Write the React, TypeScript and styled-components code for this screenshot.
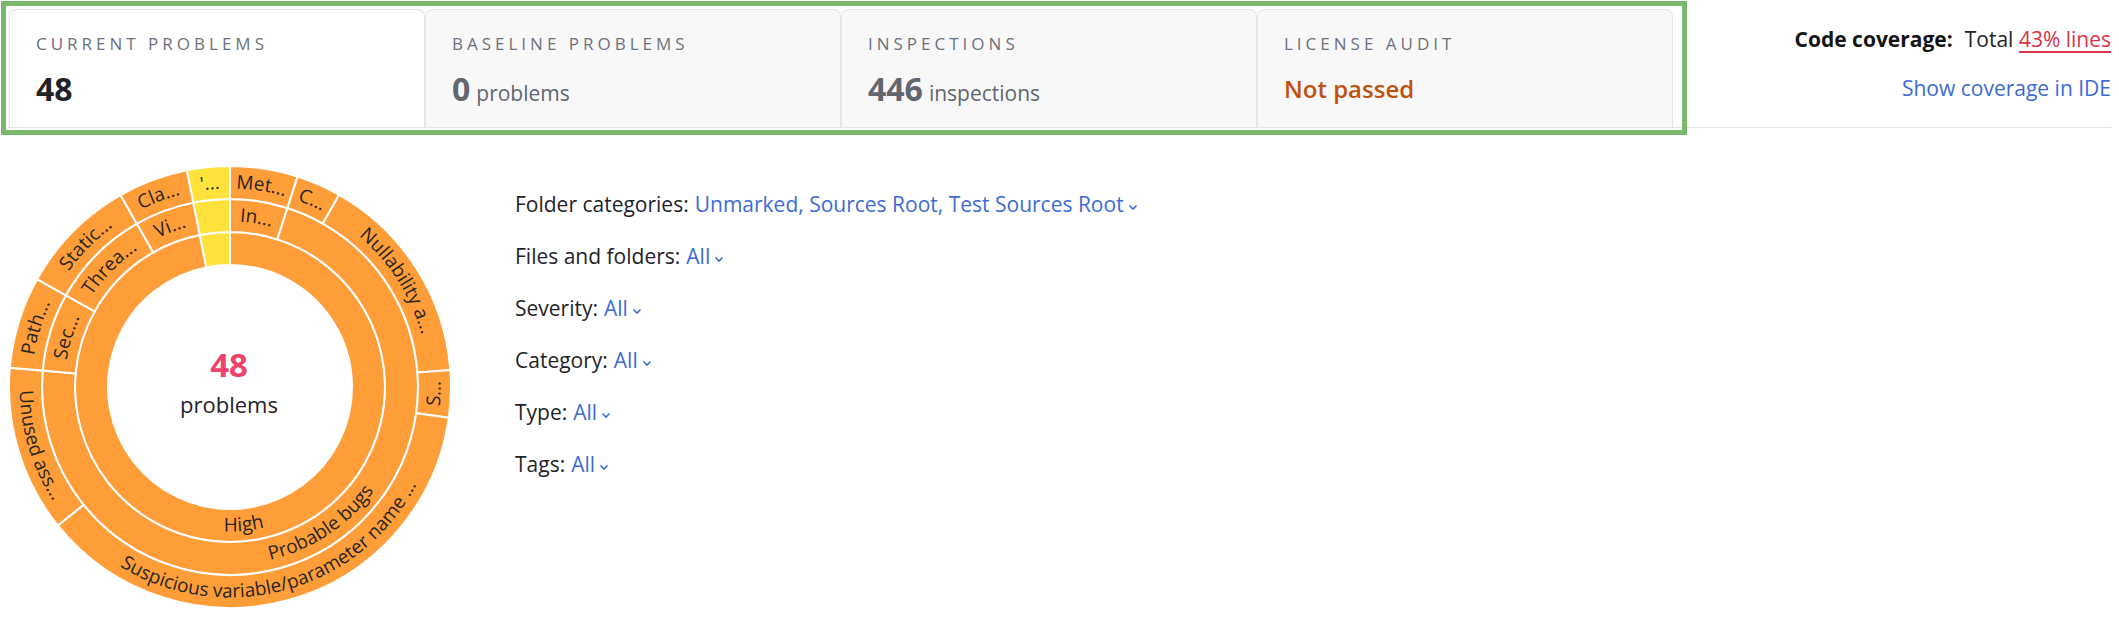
import styled, {createGlobalStyle} from 'styled-components';

const GlobalStyle = createGlobalStyle`
  body {
    margin: 0;
    background: #ffffff;
    font-family: 'Open Sans', 'Noto Sans', sans-serif;
    color: #1f2328;
  }
`;

const Page = styled.div`
  padding: 0 8px;
`;

const HeaderRow = styled.div`
  display: flex;
  justify-content: space-between;
  align-items: flex-start;
  padding-top: 9px;
  border-bottom: 1px solid #e3e5ea;
`;

const TabsFrame = styled.div`
  display: flex;
  width: 1670px;
  height: 118px;
  margin-left: 1px;
  outline: 5px solid #77b86b;
  outline-offset: 3px;
`;

const Tab = styled.div<{active?: boolean}>`
  flex: 0 0 416px;
  box-sizing: border-box;
  padding: 24px 0 0 26px;
  border: 1px solid #e3e5ea;
  border-bottom: none;
  border-radius: 7px 7px 0 0;
  background: ${p => (p.active ? '#ffffff' : '#f8f8f9')};
`;

const TabLabel = styled.div`
  font-size: 17px;
  line-height: 20px;
  letter-spacing: 4px;
  color: #6d717c;
  text-transform: uppercase;
`;

const TabValue = styled.div<{tone?: string}>`
  margin-top: 17px;
  font-size: 32px;
  line-height: 36px;
  font-weight: 700;
  color: ${p => p.tone || '#1f2328'};
  span {
    font-size: 21px;
    font-weight: 400;
    margin-left: 6px;
  }
`;

const StatusValue = styled.div`
  margin-top: 17px;
  font-size: 24px;
  line-height: 36px;
  font-weight: 600;
  color: #c2510d;
`;

const Coverage = styled.div`
  padding-top: 15px;
  text-align: right;
  font-size: 21px;
  line-height: 30px;
`;

const CoverageLine = styled.div`
  color: #1f2328;
  b {
    font-weight: 700;
    color: #141414;
    margin-right: 12px;
  }
`;

const CoverageValue = styled.span`
  color: #d8344a;
  text-decoration: underline;
  text-underline-offset: 4px;
`;

const IdeLink = styled.div`
  margin-top: 19px;
  color: #3d6bd4;
`;

const Body = styled.div`
  display: flex;
  align-items: flex-start;
  padding-top: 37px;
`;

const Chart = styled.svg`
  flex: 0 0 auto;
  display: block;
`;

const Filters = styled.div`
  display: flex;
  flex-direction: column;
  gap: 22px;
  margin: 24px 0 0 63px;
  font-size: 21px;
  line-height: 30px;
`;

const FilterRow = styled.div`
  color: #1f2328;
  white-space: nowrap;
`;

const FilterValue = styled.span`
  color: #3d6bd4;
  margin-left: 6px;
  svg {
    margin-left: 4px;
    vertical-align: 1px;
  }
`;

const ORANGE = '#ff9d38';
const YELLOW = '#ffe23b';
const CX = 222;
const CY = 222;

type Seg = {a0: number; a1: number; label?: string; color?: string};
type Ring = {r0: number; r1: number; segs: Seg[]};

const rings: Ring[] = [
  {
    r0: 122,
    r1: 155,
    segs: [
      {a0: -11.3, a1: 0, color: YELLOW},
      {a0: 0, a1: 348.7, label: 'High'},
    ],
  },
  {
    r0: 155,
    r1: 188,
    segs: [
      {a0: -11.3, a1: 0, color: YELLOW},
      {a0: 0, a1: 17.8, label: 'In...'},
      {a0: 17.8, a1: 275, label: 'Probable bugs'},
      {a0: 275, a1: 299.2, label: 'Sec...'},
      {a0: 299.2, a1: 330.3, label: 'Threa...'},
      {a0: 330.3, a1: 348.7, label: 'Vi...'},
    ],
  },
  {
    r0: 188,
    r1: 221,
    segs: [
      {a0: -11.3, a1: 0, color: YELLOW, label: "'..."},
      {a0: 0, a1: 17.8, label: 'Met...'},
      {a0: 17.8, a1: 29.6, label: 'C...'},
      {a0: 29.6, a1: 85.6, label: 'Nullability a...'},
      {a0: 85.6, a1: 98, label: 'S...'},
      {a0: 98, a1: 231.2, label: 'Suspicious variable/parameter name ...'},
      {a0: 231.2, a1: 275, label: 'Unused ass...'},
      {a0: 275, a1: 299.2, label: 'Path...'},
      {a0: 299.2, a1: 330.3, label: 'Static...'},
      {a0: 330.3, a1: 348.7, label: 'Cla...'},
    ],
  },
];

const pt = (r: number, a: number) => {
  const t = (a * Math.PI) / 180;
  return `${(CX + r * Math.sin(t)).toFixed(2)} ${(CY - r * Math.cos(t)).toFixed(2)}`;
};

const sector = (r0: number, r1: number, a0: number, a1: number) => {
  const large = a1 - a0 > 180 ? 1 : 0;
  return `M${pt(r1, a0)} A${r1} ${r1} 0 ${large} 1 ${pt(r1, a1)} L${pt(r0, a1)} A${r0} ${r0} 0 ${large} 0 ${pt(r0, a0)}Z`;
};

// text runs along the arc; bottom half is reversed so it stays upright
const labelArc = (r: number, a0: number, a1: number, flip: boolean) => {
  const large = a1 - a0 > 180 ? 1 : 0;
  return flip
    ? `M${pt(r, a1)} A${r} ${r} 0 ${large} 0 ${pt(r, a0)}`
    : `M${pt(r, a0)} A${r} ${r} 0 ${large} 1 ${pt(r, a1)}`;
};

function Sunburst() {
  return (
    <Chart width={444} height={444} viewBox="0 0 444 444">
      {rings.map((ring, ri) =>
        ring.segs.map((s, si) => {
          const id = `lbl-${ri}-${si}`;
          const mid = ((s.a0 + s.a1) / 2 + 360) % 360;
          const flip = mid > 90 && mid < 270;
          const rm = (ring.r0 + ring.r1) / 2;
          return (
            <g key={id}>
              <path
                d={sector(ring.r0, ring.r1, s.a0, s.a1)}
                fill={s.color || ORANGE}
                stroke="#ffffff"
                strokeWidth={2}
              />
              {s.label && (
                <>
                  <path id={id} d={labelArc(flip ? rm + 6 : rm - 6, s.a0, s.a1, flip)} fill="none" />
                  <text fontSize={19} fill="#262626" textAnchor="middle">
                    <textPath href={`#${id}`} startOffset="50%">
                      {s.label}
                    </textPath>
                  </text>
                </>
              )}
            </g>
          );
        }),
      )}
      <text x={CX - 1} y={212} fontSize={33} fontWeight={700} fill="#f0436b" textAnchor="middle">
        48
      </text>
      <text x={CX - 1} y={248} fontSize={22} fill="#1f2328" textAnchor="middle">
        problems
      </text>
    </Chart>
  );
}

const Chevron = () => (
  <svg width="10" height="7" viewBox="0 0 10 7">
    <polyline points="1.5,1.5 5,5 8.5,1.5" fill="none" stroke="#3d6bd4" strokeWidth="1.6" />
  </svg>
);

const filters = [
  ['Folder categories:', 'Unmarked, Sources Root, Test Sources Root'],
  ['Files and folders:', 'All'],
  ['Severity:', 'All'],
  ['Category:', 'All'],
  ['Type:', 'All'],
  ['Tags:', 'All'],
];

export default function App() {
  return (
    <Page>
      <GlobalStyle />
      <HeaderRow>
        <TabsFrame>
          <Tab active>
            <TabLabel>Current problems</TabLabel>
            <TabValue>48</TabValue>
          </Tab>
          <Tab>
            <TabLabel>Baseline problems</TabLabel>
            <TabValue tone="#62666f">
              0<span>problems</span>
            </TabValue>
          </Tab>
          <Tab>
            <TabLabel>Inspections</TabLabel>
            <TabValue tone="#62666f">
              446<span>inspections</span>
            </TabValue>
          </Tab>
          <Tab>
            <TabLabel>License audit</TabLabel>
            <StatusValue>Not passed</StatusValue>
          </Tab>
        </TabsFrame>
        <Coverage>
          <CoverageLine>
            <b>Code coverage:</b>Total <CoverageValue>43% lines</CoverageValue>
          </CoverageLine>
          <IdeLink>Show coverage in IDE</IdeLink>
        </Coverage>
      </HeaderRow>
      <Body>
        <Sunburst />
        <Filters>
          {filters.map(([label, value]) => (
            <FilterRow key={label}>
              {label}
              <FilterValue>
                {value}
                <Chevron />
              </FilterValue>
            </FilterRow>
          ))}
        </Filters>
      </Body>
    </Page>
  );
}
